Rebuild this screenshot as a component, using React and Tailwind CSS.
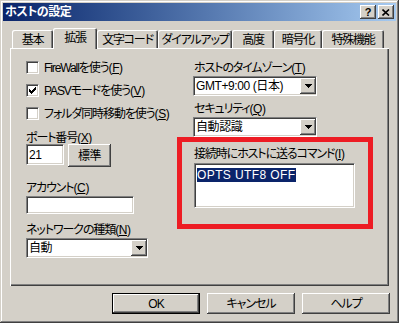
import React from "react";

const raised =
  "bg-[#d4d0c8] shadow-[inset_-1px_-1px_#404040,inset_1px_1px_#ffffff,inset_-2px_-2px_#808080,inset_2px_2px_#d4d0c8]";
const sunken =
  "bg-white border border-t-[#808080] border-l-[#808080] border-b-white border-r-white shadow-[inset_1px_1px_#404040,inset_-1px_-1px_#d4d0c8]";

// label with an underlined accelerator key, e.g. (F)
function Acc({ text, k }) {
  return (
    <span className="leading-[14px] whitespace-nowrap">
      <span className="tracking-[-1.1px]">{text}</span>(
      <span className="underline underline-offset-[1px]">{k}</span>)
    </span>
  );
}

function Checkbox({ text, k, checked }) {
  return (
    <div className="flex items-center h-[13px] gap-[5px]">
      <div className={`w-[13px] h-[13px] shrink-0 flex items-center justify-center ${sunken}`}>
        {checked && (
          <svg width="7" height="7" viewBox="0 0 7 7" shapeRendering="crispEdges">
            {[2, 3, 4, 3, 2, 1, 0].map((y, i) => (
              <rect key={i} x={i} y={y} width="1" height="3" fill="#000" />
            ))}
          </svg>
        )}
      </div>
      <Acc text={text} k={k} />
    </div>
  );
}

function Arrow() {
  return (
    <svg width="7" height="4" viewBox="0 0 7 4" shapeRendering="crispEdges">
      <rect x="0" y="0" width="7" height="1" fill="#000" />
      <rect x="1" y="1" width="5" height="1" fill="#000" />
      <rect x="2" y="2" width="3" height="1" fill="#000" />
      <rect x="3" y="3" width="1" height="1" fill="#000" />
    </svg>
  );
}

function Combo({ value, width }) {
  return (
    <div className={`h-[20px] flex items-center ${sunken} ${width}`}>
      <span className="flex-1 pl-[2px] leading-[14px] whitespace-nowrap">{value}</span>
      <div className={`w-[16px] h-[16px] flex items-center justify-center ${raised}`}>
        <Arrow />
      </div>
    </div>
  );
}

function Tab({ label, width, selected }) {
  return (
    <div
      className={`${width} flex justify-center rounded-t-[2px] bg-[#d4d0c8] shadow-[inset_1px_1px_#ffffff,inset_-1px_0_#404040,inset_-2px_0_#808080] ${
        selected ? "h-[21px] -mb-[1px] relative z-10 pt-[3px]" : "h-[18px] pt-[3px]"
      }`}
    >
      <span className="leading-[14px] whitespace-nowrap tracking-[-1.2px]">{label}</span>
    </div>
  );
}

function Button({ label, isDefault }) {
  return (
    <div
      className={`w-[88px] h-[21px] flex items-center justify-center ${
        isDefault
          ? "border border-black bg-[#d4d0c8] shadow-[inset_-1px_-1px_#404040,inset_1px_1px_#ffffff,inset_-2px_-2px_#808080]"
          : raised
      }`}
    >
      <span className="leading-[14px] tracking-[-1px]">{label}</span>
    </div>
  );
}

export default function App() {
  return (
    <div className='w-[399px] h-[323px] bg-[#d4d0c8] p-[3px] text-[12px] tracking-[-0.4px] text-black font-["Liberation_Sans","Noto_Sans_CJK_JP",sans-serif] [font-feature-settings:"palt"] shadow-[inset_-1px_-1px_#404040,inset_1px_1px_#d4d0c8,inset_-2px_-2px_#808080,inset_2px_2px_#ffffff]'>
      {/* title bar */}
      <div className="h-[18px] flex items-center justify-between pl-[2px] pr-[2px] bg-gradient-to-r from-[#0a246a] to-[#a6caf0]">
        <span className="text-white font-bold leading-[14px] tracking-[-0.5px]">ホストの設定</span>
        <div className="flex gap-[2px]">
          <div className={`w-[16px] h-[14px] flex items-center justify-center ${raised}`}>
            <span className="font-bold text-[11px] leading-[11px]">?</span>
          </div>
          <div className={`w-[16px] h-[14px] flex items-center justify-center ${raised}`}>
            <svg width="8" height="7" viewBox="0 0 8 7">
              <path d="M0.5 0.5 L7 6.5 M7 0.5 L0.5 6.5" stroke="#000" strokeWidth="1.6" />
            </svg>
          </div>
        </div>
      </div>

      {/* tabs */}
      <div className="h-[27px] flex items-end pl-[9px]">
        <Tab label="基本" width="w-[41px]" />
        <Tab label="拡張" width="w-[44px]" selected />
        <Tab label="文字コード" width="w-[61px]" />
        <Tab label="ダイアルアップ" width="w-[74px]" />
        <Tab label="高度" width="w-[42px]" />
        <Tab label="暗号化" width="w-[48px]" />
        <Tab label="特殊機能" width="w-[62px]" />
      </div>

      {/* tab panel */}
      <div className="relative ml-[7px] w-[379px] h-[238px] flex pt-[13px] pl-[16px] shadow-[inset_1px_1px_#ffffff,inset_-1px_-1px_#404040,inset_-2px_-2px_#808080]">
        <div className="w-[167px] flex flex-col">
          <Checkbox text="FireWallを使う" k="F" />
          <div className="mt-[10px]">
            <Checkbox text="PASVモードを使う" k="V" checked />
          </div>
          <div className="mt-[10px]">
            <Checkbox text="フォルダ同時移動を使う" k="S" />
          </div>
          <div className="mt-[11px] h-[13px] flex">
            <Acc text="ポート番号" k="X" />
          </div>
          <div className="flex items-start gap-[4px]">
            <div className={`w-[38px] h-[21px] pl-[2px] flex items-center ${sunken}`}>
              <span className="leading-[14px]">21</span>
            </div>
            <div className={`w-[43px] h-[23px] flex items-center justify-center ${raised}`}>
              <span className="leading-[14px]">標準</span>
            </div>
          </div>
          <div className="mt-[14px] h-[14px] flex">
            <Acc text="アカウント" k="C" />
          </div>
          <div className={`mt-[1px] w-[108px] h-[18px] ${sunken}`} />
          <div className="mt-[9px] h-[14px] flex">
            <Acc text="ネットワークの種類" k="N" />
          </div>
          <div className="mt-[1px]">
            <Combo value="自動" width="w-[122px]" />
          </div>
        </div>

        <div className="flex flex-col">
          <div className="h-[14px] pl-[1px] flex">
            <Acc text="ホストのタイムゾーン" k="T" />
          </div>
          <div className="mt-[1px]">
            <Combo value="GMT+9:00 (日本)" width="w-[124px]" />
          </div>
          <div className="mt-[6px] h-[14px] pl-[1px] flex">
            <Acc text="セキュリティ" k="Q" />
          </div>
          <div className="mt-[1px]">
            <Combo value="自動認識" width="w-[124px]" />
          </div>
          <div className="mt-[10px] h-[14px] pl-[1px] flex">
            <Acc text="接続時にホストに送るコマンド" k="I" />
          </div>
          <div className={`mt-[2px] ml-[1px] w-[161px] h-[45px] pl-[2px] pt-[2px] ${sunken}`}>
            <span className="bg-[#0a246a] text-white leading-[14px] tracking-[0.4px]">OPTS UTF8 OFF</span>
          </div>
        </div>

        {/* red annotation */}
        <div className="absolute left-[167px] top-[89px] w-[196px] h-[92px] border-[5px] border-[#ed1c24]" />
      </div>

      {/* buttons */}
      <div className="mt-[7px] flex justify-end gap-[7px] pr-[6px]">
        <Button label="OK" isDefault />
        <Button label="キャンセル" />
        <Button label="ヘルプ" />
      </div>
    </div>
  );
}
